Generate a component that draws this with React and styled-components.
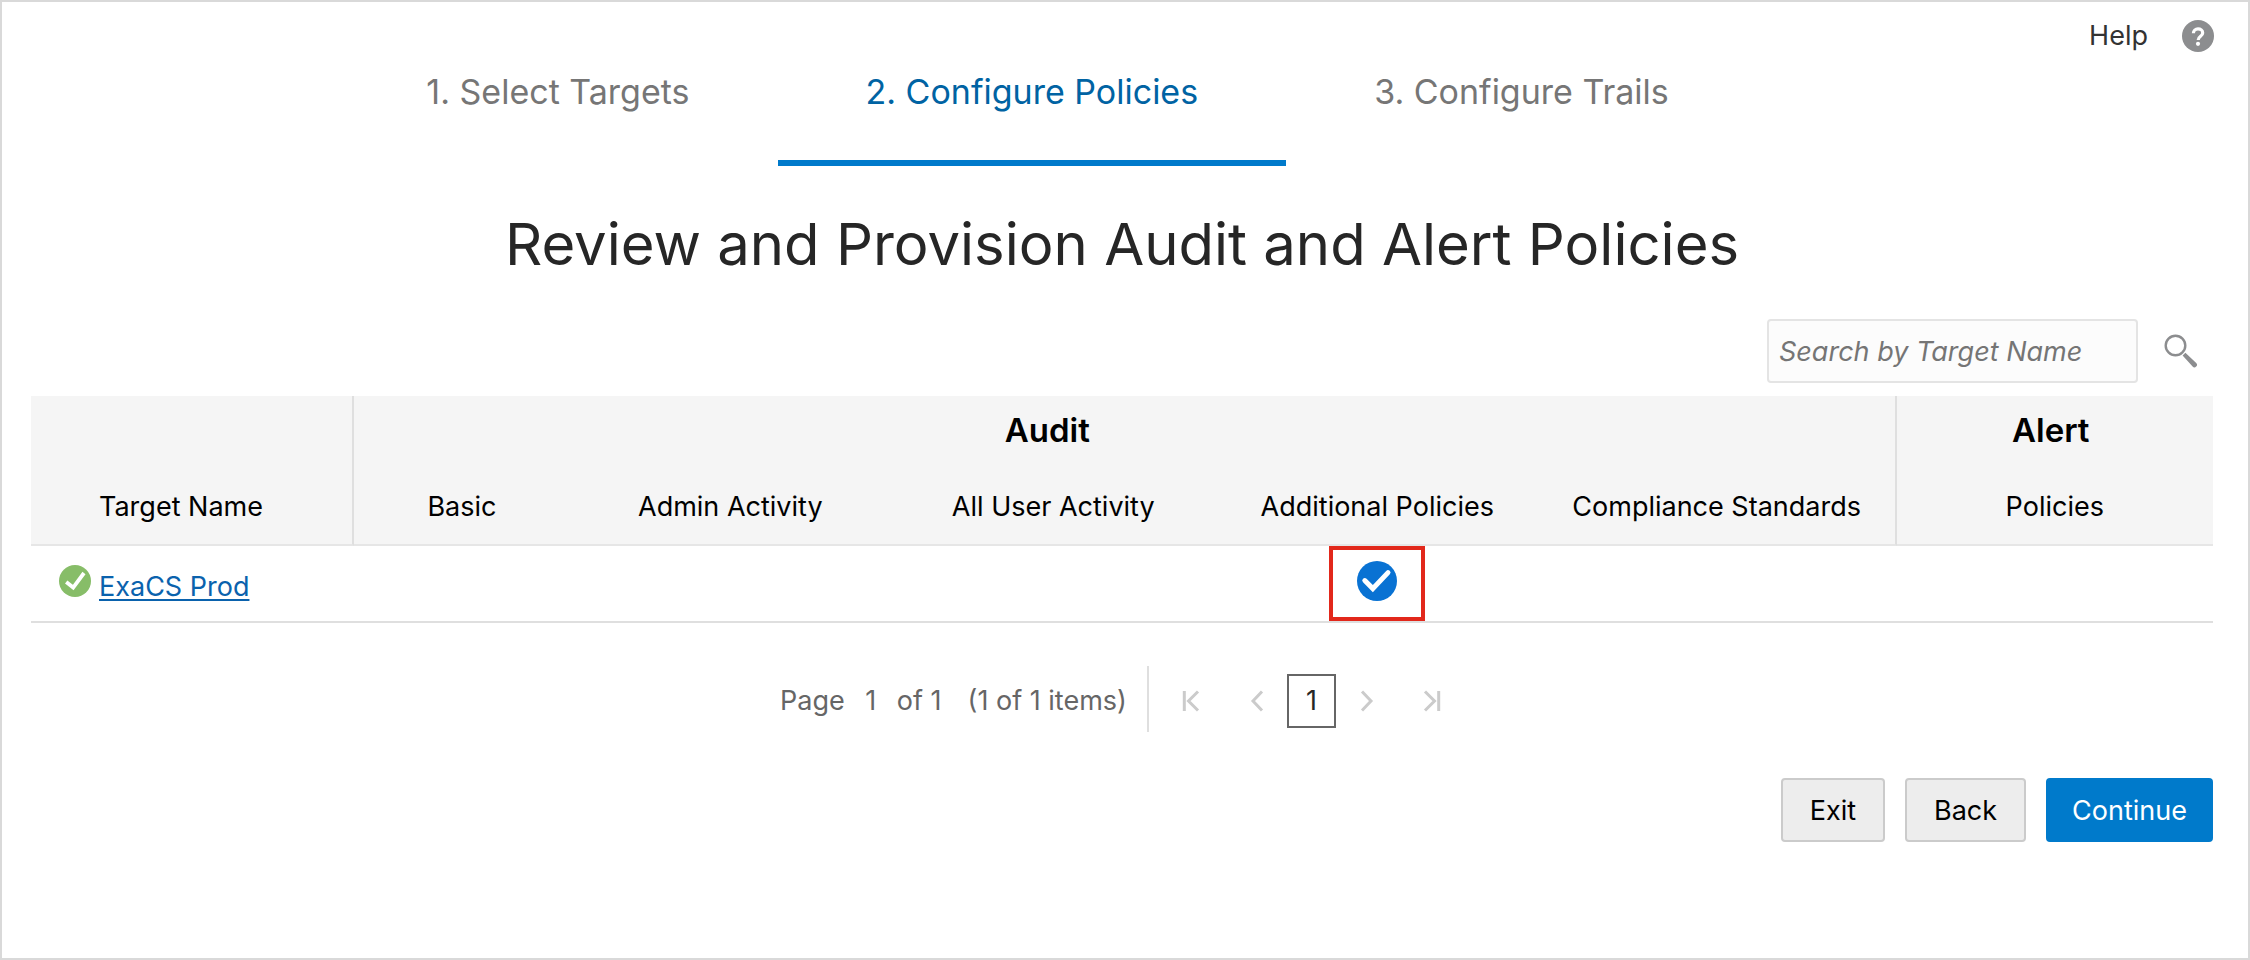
import React, { useState } from "react";
import styled, { createGlobalStyle } from "styled-components";

const GlobalStyle = createGlobalStyle`
  *, *::before, *::after { box-sizing: border-box; }
  body {
    margin: 0;
    background: #fff;
    color: #000;
    font-family: Inter, "Liberation Sans", sans-serif;
    font-size: 27px;
    line-height: 36px;
  }
  button, input { font: inherit; color: inherit; }
`;

const Page = styled.div`
  min-height: 100vh;
  padding-bottom: 48px;
  border: 2px solid #d9d9d9;
`;

const Header = styled.header`
  display: flex;
  align-items: flex-start;
  padding-right: 34px;
`;

const Steps = styled.nav`
  flex: 1;
  display: flex;
  justify-content: center;
  padding-left: 4px;
`;

const Step = styled.button`
  height: 164px;
  padding: 66px 88px 50px;
  border: 0;
  border-bottom: 6px solid ${(p) => (p.$active ? "#007acb" : "transparent")};
  background: none;
  color: ${(p) => (p.$active ? "#0063a3" : "#767676")};
  font-size: 34px;
  line-height: 48px;
  white-space: nowrap;
  cursor: pointer;
`;

const HelpLink = styled.a`
  display: flex;
  align-items: center;
  gap: 34px;
  padding-top: 16px;
  color: #333;
  text-decoration: none;
`;

const Icon = styled.svg`
  display: block;
  flex: none;
  width: ${(p) => p.$size}px;
  height: ${(p) => p.$size}px;
`;

const Title = styled.h1`
  margin: 38px 0 0;
  color: #262626;
  font-size: 58px;
  font-weight: 400;
  line-height: 80px;
  text-align: center;
`;

const Main = styled.main`
  padding: 0 35px 0 29px;
`;

const Search = styled.form`
  display: flex;
  align-items: center;
  justify-content: flex-end;
  gap: 26px;
  margin: 35px 15px 13px 0;
`;

const SearchInput = styled.input`
  width: 371px;
  height: 64px;
  padding: 0 10px;
  border: 2px solid #e4e4e4;
  border-radius: 4px;
  background: #fcfcfc;
  &::placeholder {
    color: #757575;
    font-style: italic;
    opacity: 1;
  }
`;

const IconButton = styled.button`
  display: grid;
  place-items: center;
  padding: 0;
  border: 0;
  background: none;
  cursor: pointer;
  &:disabled { cursor: default; }
`;

const Table = styled.table`
  width: 100%;
  table-layout: fixed;
  border-collapse: separate;
  border-spacing: 0;
`;

const Col = styled.col`
  width: ${(p) => p.$share}%;
`;

const GroupHead = styled.th`
  height: 72px;
  padding: 0 ${(p) => p.$inset || 0}px 4px 0;
  border-right: ${(p) => (p.$divider ? "2px solid #dfdfdf" : "0")};
  background: #f5f5f5;
  font-size: 33px;
  font-weight: 600;
  line-height: 40px;
`;

const Head = styled.th`
  height: 78px;
  padding: 2px 0 0;
  border-right: ${(p) => (p.$divider ? "2px solid #dfdfdf" : "0")};
  border-bottom: 2px solid #e6e6e6;
  background: #f5f5f5;
  font-weight: 400;
  text-align: center;
  white-space: nowrap;
`;

const NameHead = styled(Head)`
  padding-left: 68px;
  text-align: left;
`;

const Cell = styled.td`
  height: 77px;
  padding: 0;
  border-bottom: 2px solid #dfdfdf;
`;

const TargetName = styled.div`
  display: flex;
  align-items: center;
  gap: 8px;
  padding: 0 0 6px 28px;
`;

const TargetLink = styled.a`
  padding-top: 12px;
  color: #0a62ad;
  text-decoration: underline;
  text-decoration-thickness: 2px;
  text-underline-offset: 3px;
`;

const Highlight = styled.div`
  display: flex;
  justify-content: center;
  width: 96px;
  height: 75px;
  margin: 0 auto;
  padding-top: 11px;
  border: 4px solid #e2281b;
`;

const Pager = styled.nav`
  display: flex;
  align-items: center;
  justify-content: center;
  height: 66px;
  margin: 43px 16px 0 0;
  color: #666;
  white-space: nowrap;
`;

const PageInfo = styled.div`
  display: flex;
  align-items: center;
  padding-top: 4px;
`;

const PageInput = styled.input`
  width: 52px;
  padding: 0;
  border: 0;
  background: none;
  text-align: center;
`;

const ItemCount = styled.span`
  padding: 0 20px 0 26px;
`;

const PagerNav = styled.div`
  display: flex;
  align-items: center;
  gap: 18px;
  align-self: stretch;
  padding: 4px 0 0 26px;
  border-left: 2px solid #dfdfdf;
`;

const PagerStep = styled(IconButton)`
  width: 32px;
  height: 54px;
`;

const PagerGroup = styled.div`
  display: flex;
  align-items: center;
  gap: 14px;
  margin: 0 16px;
`;

const CurrentPage = styled.button`
  width: 49px;
  height: 54px;
  padding: 0;
  border: 2px solid #666;
  background: #fff;
  color: #262626;
`;

const Actions = styled.footer`
  display: flex;
  justify-content: flex-end;
  gap: 20px;
  margin-top: 46px;
`;

const Action = styled.button`
  height: 64px;
  padding: 2px ${(p) => (p.$primary ? 24 : 27)}px 0;
  border: 2px solid ${(p) => (p.$primary ? "#007acb" : "#cbcbcb")};
  border-radius: 4px;
  background: ${(p) => (p.$primary ? "#007acb" : "#ededed")};
  color: ${(p) => (p.$primary ? "#fff" : "#000")};
  cursor: pointer;
`;

const HelpIcon = () => (
  <Icon $size={32} viewBox="0 0 32 32" aria-hidden="true">
    <circle cx="16" cy="16" r="16" fill="#8c8d8f" />
    <path
      d="M11.4 13.2c0-2.6 2-4.3 4.6-4.3s4.7 1.6 4.7 4c0 3.4-4.5 3.2-4.5 7"
      fill="none"
      stroke="#fff"
      strokeWidth="3.2"
    />
    <circle cx="16" cy="23.8" r="2.1" fill="#fff" />
  </Icon>
);

const SearchIcon = () => (
  <Icon $size={34} viewBox="0 0 34 34" aria-hidden="true">
    <circle cx="11.5" cy="11.5" r="9.8" fill="none" stroke="#8c8d8f" strokeWidth="2.4" />
    <path d="M18.6 21.4l2.8-2.7 10.8 10.2a2.5 2.5 0 0 1-3.6 3.6z" fill="#8c8d8f" />
  </Icon>
);

const SuccessIcon = () => (
  <Icon $size={32} viewBox="0 0 32 32" role="img" aria-label="Ready">
    <circle cx="16" cy="16" r="16" fill="#87bd68" />
    <path d="M7.2 17l7 5.6L25 8" fill="none" stroke="#fff" strokeWidth="3.8" />
  </Icon>
);

const SelectedIcon = () => (
  <Icon $size={40} viewBox="0 0 40 40" role="img" aria-label="Selected">
    <circle cx="20" cy="20" r="20" fill="#0972d3" />
    <path
      d="M7.8 19.6l8 8L31 11.6"
      fill="none"
      stroke="#fff"
      strokeWidth="5"
      strokeLinecap="round"
    />
  </Icon>
);

const PAGER_SHAPES = {
  first: "M9.3 6v20M23 6.5L13.5 16 23 25.5",
  previous: "M21 6.5L12 16 21 25.5",
  next: "M12 6.5l9 9.5-9 9.5",
  last: "M9 6.5L18.5 16 9 25.5M22.7 6v20",
};

const PagerButton = ({ kind }) => (
  <PagerStep type="button" disabled aria-label={`Go to ${kind} page`}>
    <Icon $size={32} viewBox="0 0 32 32" aria-hidden="true">
      <path d={PAGER_SHAPES[kind]} fill="none" stroke="#cbcbcb" strokeWidth="3" />
    </Icon>
  </PagerStep>
);

const STEPS = ["1. Select Targets", "2. Configure Policies", "3. Configure Trails"];
const COLUMN_SHARES = [14.8, 9.9, 14.7, 14.9, 14.8, 16.4, 14.5];
const AUDIT_COLUMNS = [
  "Basic",
  "Admin Activity",
  "All User Activity",
  "Additional Policies",
  "Compliance Standards",
];
const TARGETS = [{ name: "ExaCS Prod", policies: ["Additional Policies"] }];

export default function App() {
  const [query, setQuery] = useState("");
  const [page, setPage] = useState("1");

  return (
    <Page>
      <GlobalStyle />
      <Header>
        <Steps aria-label="Progress">
          {STEPS.map((label, i) => (
            <Step
              key={label}
              type="button"
              $active={i === 1}
              aria-current={i === 1 ? "step" : undefined}
            >
              {label}
            </Step>
          ))}
        </Steps>
        <HelpLink href="#help">
          Help
          <HelpIcon />
        </HelpLink>
      </Header>

      <Main>
        <Title>Review and Provision Audit and Alert Policies</Title>

        <Search role="search" onSubmit={(e) => e.preventDefault()}>
          <SearchInput
            type="text"
            aria-label="Search by Target Name"
            placeholder="Search by Target Name"
            value={query}
            onChange={(e) => setQuery(e.target.value)}
          />
          <IconButton type="submit" aria-label="Search">
            <SearchIcon />
          </IconButton>
        </Search>

        <Table>
          <colgroup>
            {COLUMN_SHARES.map((share, i) => (
              <Col key={i} $share={share} />
            ))}
          </colgroup>
          <thead>
            <tr>
              <GroupHead as="td" $divider />
              <GroupHead scope="colgroup" colSpan={5} $divider $inset={154}>
                Audit
              </GroupHead>
              <GroupHead scope="colgroup" $inset={8}>
                Alert
              </GroupHead>
            </tr>
            <tr>
              <NameHead scope="col" $divider>
                Target Name
              </NameHead>
              {AUDIT_COLUMNS.map((label, i) => (
                <Head key={label} scope="col" $divider={i === AUDIT_COLUMNS.length - 1}>
                  {label}
                </Head>
              ))}
              <Head scope="col">Policies</Head>
            </tr>
          </thead>
          <tbody>
            {TARGETS.map((target) => (
              <tr key={target.name}>
                <Cell>
                  <TargetName>
                    <SuccessIcon />
                    <TargetLink href="#target">{target.name}</TargetLink>
                  </TargetName>
                </Cell>
                {AUDIT_COLUMNS.map((label) => (
                  <Cell key={label}>
                    {target.policies.includes(label) && (
                      <Highlight>
                        <SelectedIcon />
                      </Highlight>
                    )}
                  </Cell>
                ))}
                <Cell />
              </tr>
            ))}
          </tbody>
        </Table>

        <Pager aria-label="Pagination">
          <PageInfo>
            <label htmlFor="page-number">Page</label>
            <PageInput
              id="page-number"
              type="text"
              value={page}
              onChange={(e) => setPage(e.target.value)}
            />
            <span>of 1</span>
            <ItemCount>(1 of 1 items)</ItemCount>
          </PageInfo>
          <PagerNav>
            <PagerButton kind="first" />
            <PagerGroup>
              <PagerButton kind="previous" />
              <CurrentPage type="button" aria-current="page">
                1
              </CurrentPage>
              <PagerButton kind="next" />
            </PagerGroup>
            <PagerButton kind="last" />
          </PagerNav>
        </Pager>

        <Actions>
          <Action type="button">Exit</Action>
          <Action type="button">Back</Action>
          <Action type="button" $primary>
            Continue
          </Action>
        </Actions>
      </Main>
    </Page>
  );
}
